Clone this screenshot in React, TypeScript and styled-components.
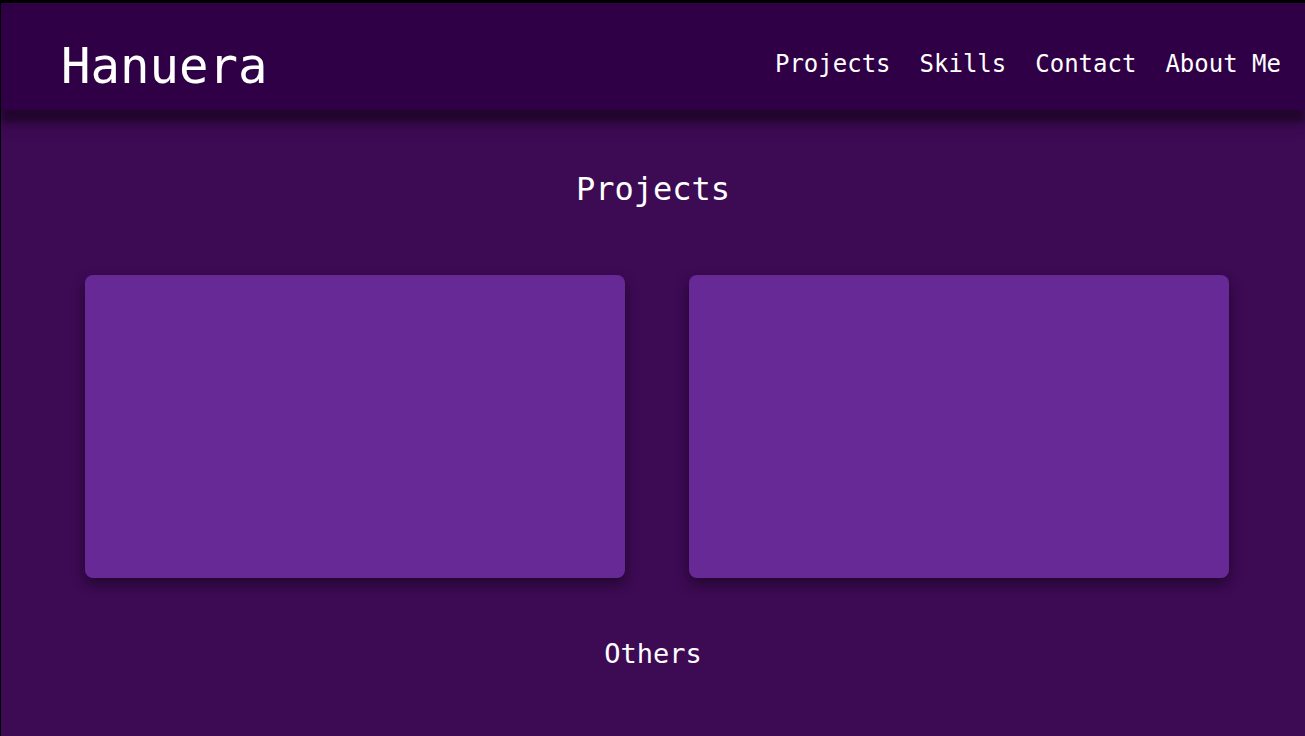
import styled, { createGlobalStyle } from "styled-components";

const GlobalStyle = createGlobalStyle`
  * {
    box-sizing: border-box;
  }

  body {
    margin: 0;
    background-color: #000;
    font-family: "DejaVu Sans Mono", "Liberation Mono", monospace;
    color: #fff;
  }
`;

const Page = styled.div`
  min-height: 100vh;
  border-top: 3px solid #000;
  border-left: 1px solid #000;
  background-color: #3d0a54;
  display: flex;
  flex-direction: column;
`;

const Header = styled.header`
  position: relative;
  z-index: 2;
  height: 107px;
  display: flex;
  justify-content: space-between;
  align-items: flex-start;
  padding: 0 24px 0 60px;
  background-color: #2f0046;
  box-shadow: 0 12px 6px rgba(0, 0, 0, 0.35), 0 18px 14px rgba(0, 0, 0, 0.15);
`;

const Logo = styled.h1`
  margin: 39px 0 0;
  font-size: 49px;
  font-weight: 400;
  line-height: 1;
`;

const Nav = styled.nav`
  display: flex;
  gap: 29px;
  margin-top: 49px;
`;

const NavLink = styled.a`
  font-size: 24px;
  line-height: 1;
  color: #fff;
  text-decoration: none;
  cursor: pointer;
`;

const Main = styled.main`
  display: flex;
  flex-direction: column;
  align-items: center;
`;

const SectionTitle = styled.h2<{ size: number; top: number }>`
  margin: ${(p) => p.top}px 0 0;
  font-size: ${(p) => p.size}px;
  font-weight: 400;
  line-height: 1;
  text-align: center;
`;

const CardGrid = styled.div`
  align-self: stretch;
  display: grid;
  grid-template-columns: 540px 540px;
  gap: 64px;
  margin-top: 70px;
  padding: 0 0 0 84px;
`;

const Card = styled.div`
  height: 303px;
  border-radius: 8px;
  background-color: #662996;
  box-shadow: 0 6px 14px rgba(0, 0, 0, 0.45);
`;

const projects = ["first", "second"];

export default function App() {
  return (
    <>
      <GlobalStyle />
      <Page>
        <Header>
          <Logo>Hanuera</Logo>
          <Nav>
            <NavLink>Projects</NavLink>
            <NavLink>Skills</NavLink>
            <NavLink>Contact</NavLink>
            <NavLink>About Me</NavLink>
          </Nav>
        </Header>
        <Main>
          <SectionTitle size={32} top={63}>
            Projects
          </SectionTitle>
          <CardGrid>
            {projects.map((p) => (
              <Card key={p} />
            ))}
          </CardGrid>
          <SectionTitle size={27} top={62}>
            Others
          </SectionTitle>
        </Main>
      </Page>
    </>
  );
}
